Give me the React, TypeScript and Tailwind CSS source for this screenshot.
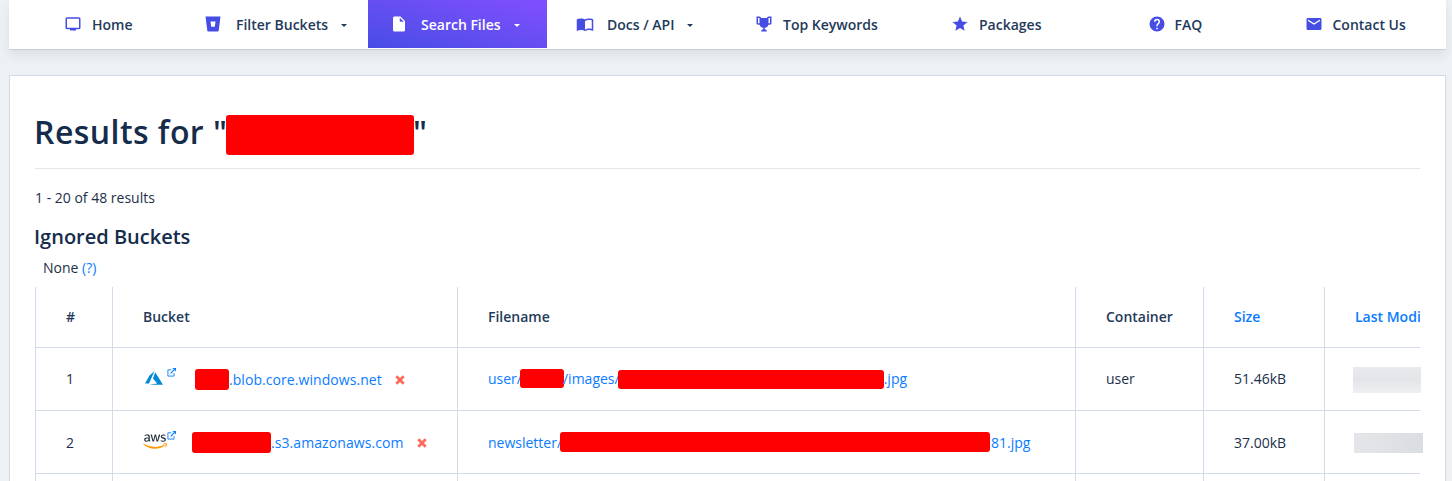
import type { ReactNode } from "react";
import { FaAws } from "react-icons/fa";

const Icon = ({ d }: { d: string }) => (
  <svg viewBox="0 0 24 24" className="h-[18px] w-[18px] shrink-0 fill-current" fillRule="evenodd">
    <path d={d} />
  </svg>
);

const icons = {
  monitor:
    "M4 3H20A2 2 0 0 1 22 5V17A2 2 0 0 1 20 19H16V20.5H8V19H4A2 2 0 0 1 2 17V5A2 2 0 0 1 4 3ZM4 5V17H20V5Z",
  bucket: "M2 2H22L19.6 21Q19.4 22 18.4 22H5.6Q4.6 22 4.4 21ZM8.6 8.5L9.6 15.5H14.4L15.4 8.5Z",
  file: "M13 9V3.5L18.5 9M6 2C4.89 2 4 2.89 4 4V20A2 2 0 0 0 6 22H18A2 2 0 0 0 20 20V8L14 2H6Z",
  book: "M21 5C19.89 4.65 18.67 4.5 17.5 4.5C15.55 4.5 13.45 4.9 12 6C10.55 4.9 8.45 4.5 6.5 4.5C4.55 4.5 2.45 4.9 1 6V20.65C1 20.9 1.25 21.15 1.5 21.15C1.6 21.15 1.65 21.1 1.75 21.1C3.1 20.45 5.05 20 6.5 20C8.45 20 10.55 20.4 12 21.5C13.35 20.65 15.8 20 17.5 20C19.15 20 20.85 20.3 22.25 21.05C22.35 21.1 22.4 21.1 22.5 21.1C22.75 21.1 23 20.85 23 20.6V6C22.4 5.55 21.75 5.25 21 5M21 18.5C19.9 18.15 18.7 18 17.5 18C15.8 18 13.35 18.65 12 19.5V8C13.35 7.15 15.8 6.5 17.5 6.5C18.7 6.5 19.9 6.65 21 7V18.5Z",
  trophy:
    "M20.2 2H18C17.1 2 16 3 16 4H8C8 3 6.9 2 6 2H2V11C2 12 3 13 4 13H6.2C6.6 15 7.9 16.7 11 17V19.08C8 19.54 8 22 8 22H16C16 22 16 19.54 13 19.08V17C16.1 16.7 17.4 15 17.8 13H20C21 13 22 12 22 11V2H20.2M4 11V4H6V11H4M20 11H18V4H20V11Z",
  star: "M12 17.27L18.18 21L16.54 13.97L22 9.24L14.81 8.62L12 2L9.19 8.62L2 9.24L7.45 13.97L5.82 21L12 17.27Z",
  help: "M15.07 11.25L14.17 12.17C13.45 12.89 13 13.5 13 15H11V14.5C11 13.39 11.45 12.39 12.17 11.67L13.41 10.41C13.78 10.05 14 9.55 14 9C14 7.89 13.1 7 12 7A2 2 0 0 0 10 9H8A4 4 0 0 1 12 5A4 4 0 0 1 16 9C16 9.88 15.64 10.67 15.07 11.25M13 19H11V17H13M12 2A10 10 0 0 0 2 12A10 10 0 0 0 12 22A10 10 0 0 0 22 12C22 6.47 17.5 2 12 2Z",
  mail: "M20 8L12 13L4 8V6L12 11L20 6M20 4H4C2.89 4 2 4.89 2 6V18A2 2 0 0 0 4 20H20A2 2 0 0 0 22 18V6C22 4.89 21.1 4 20 4Z",
};

type NavItem = { label: string; icon: string; box: string; gap: string; caret?: boolean; active?: boolean };

const nav: NavItem[] = [
  { label: "Home", icon: icons.monitor, box: "w-[171px] pl-[55px]", gap: "ml-[10px]" },
  { label: "Filter Buckets", icon: icons.bucket, box: "w-[188px] pl-[24px]", gap: "ml-[14px]", caret: true },
  { label: "Search Files", icon: icons.file, box: "w-[179px] pl-[22px]", gap: "ml-[13px]", caret: true, active: true },
  { label: "Docs / API", icon: icons.book, box: "w-[173px] pl-[29px]", gap: "ml-[13px]", caret: true },
  { label: "Top Keywords", icon: icons.trophy, box: "w-[196px] pl-[35px]", gap: "ml-[10px]" },
  { label: "Packages", icon: icons.star, box: "w-[196px] pl-[35px]", gap: "ml-[10px]" },
  { label: "FAQ", icon: icons.help, box: "w-[158px] pl-[36px]", gap: "ml-[8.5px]" },
  { label: "Contact Us", icon: icons.mail, box: "w-[176px] pl-[35px]", gap: "ml-[9.5px]" },
];

const Redacted = ({ className }: { className: string }) => (
  <span className={`inline-block shrink-0 rounded-[3px] bg-[#ff0000] ${className}`} />
);

const ExternalIcon = () => (
  <svg viewBox="0 0 9 9" className="h-[9px] w-[9px] shrink-0" fill="none" stroke="#0a7cff">
    <path d="M4.3 1.8H.9V8.1H7V5.1" strokeWidth="0.9" />
    <path d="M3.7 5.3L7.3 1.7" strokeWidth="1.2" />
    <path d="M5.4 0H9V3.6Z" fill="#0a7cff" stroke="none" />
  </svg>
);

const AzureIcon = () => (
  <svg viewBox="0 0 18 14" className="h-[14px] w-[18px] shrink-0" fill="#0089d6">
    <path d="M9.5 0L4.5 4.4L0 12.5H4ZM10.2 1.2L8 7.4L12.2 12.4L4.1 13.8H18Z" />
  </svg>
);

const AwsIcon = () => (
  <>
    <svg className="absolute h-0 w-0">
      <linearGradient id="aws-tone" x1="0" y1="0" x2="0" y2="1">
        <stop offset="0.64" stopColor="#252f3e" />
        <stop offset="0.64" stopColor="#ff9900" />
      </linearGradient>
    </svg>
    <FaAws fill="url(#aws-tone)" className="mt-px h-[19px] w-[24px]" />
  </>
);

const RemoveIcon = () => (
  <svg viewBox="0 0 10 10" className="ml-[13px] mt-[2px] h-[10px] w-[10px] shrink-0">
    <path d="M1.3 1.3L8.7 8.7M8.7 1.3L1.3 8.7" stroke="#ff6b5a" strokeWidth="2.8" />
  </svg>
);

const Th = ({ children, className = "" }: { children: ReactNode; className?: string }) => (
  <th
    className={`border-b border-l border-[#d3dbea] pb-[2px] pl-[30px] text-left align-middle font-semibold ${className}`}
  >
    {children}
  </th>
);

const Td = ({ children, className = "" }: { children?: ReactNode; className?: string }) => (
  <td className={`border-b border-l border-[#d3dbea] pl-[30px] align-middle ${className}`}>{children}</td>
);

export default function App() {
  return (
    <div className="h-[481px] w-[1452px] overflow-hidden bg-[#edf1f4] pl-[9px] font-['Open_Sans',sans-serif] text-[14px] text-[#1d2f48]">
      <nav className="flex h-[50px] w-[1437px] border-b border-[#c9ced7] bg-white shadow-[0_5px_10px_rgba(0,0,0,0.07)]">
        {nav.map((item) => (
          <a
            key={item.label}
            className={`flex h-12 shrink-0 items-center font-semibold ${item.box} ${
              item.active ? "bg-linear-to-tr from-[#464de4] to-[#814eff] text-white" : "text-[#243a5a]"
            }`}
          >
            <span className={item.active ? "" : "text-[#464de4]"}>
              <Icon d={item.icon} />
            </span>
            <span className={`whitespace-nowrap ${item.gap}`}>{item.label}</span>
            {item.caret && (
              <span className="ml-[13px] mt-[2px] border-x-[3px] border-t-[3px] border-x-transparent border-t-current" />
            )}
          </a>
        ))}
      </nav>

      <main className="mt-[25px] h-[500px] w-[1437px] border border-[#d3dbea] bg-white px-[25px]">
        <h1 className="flex h-[93px] items-start border-b border-[#e3e5e8] pt-[33px] text-[32px] font-semibold leading-[46px] text-[#152c4b]">
          <span className="-ml-px w-[192px] whitespace-pre tracking-[0.45px]">Results for "</span>
          <Redacted className="mt-[6px] h-[40px] w-[188px]" />
          <span className="-ml-px">"</span>
        </h1>
        <p className="mt-[18px] leading-[21px]">1 - 20 of 48 results</p>
        <h2 className="-ml-px mt-[16px] text-[20px] font-semibold leading-[26px] text-[#152c4b]">Ignored Buckets</h2>
        <p className="ml-[8px] mt-[7px] leading-[21px]">
          None <a className="text-[#0a7cff]">(?)</a>
        </p>

        <table className="mt-[9px] w-[1385px] table-fixed border-separate border-spacing-0">
          <colgroup>
            <col className="w-[77px]" />
            <col className="w-[345px]" />
            <col className="w-[618px]" />
            <col className="w-[128px]" />
            <col className="w-[121px]" />
            <col className="w-[96px]" />
          </colgroup>
          <thead>
            <tr className="h-[61px] text-[#243a5a]">
              <Th>#</Th>
              <Th>Bucket</Th>
              <Th>Filename</Th>
              <Th>Container</Th>
              <Th className="text-[#0a7cff]">Size</Th>
              <Th className="text-[#0a7cff]">
                <span className="block overflow-hidden whitespace-nowrap">Last Modified</span>
              </Th>
            </tr>
          </thead>
          <tbody>
            <tr className="h-[63px]">
              <Td className="pb-[2px]">1</Td>
              <Td>
                <div className="flex h-[21px] items-center text-[#0a7cff]">
                  <span className="mb-[5px] ml-[2px] flex w-[50px] items-start">
                    <span className="pt-[3px]">
                      <AzureIcon />
                    </span>
                    <span className="ml-[4px]">
                      <ExternalIcon />
                    </span>
                  </span>
                  <Redacted className="mt-[1px] h-[21px] w-[34px]" />
                  <span className="tracking-[0.06px]">.blob.core.windows.net</span>
                  <RemoveIcon />
                </div>
              </Td>
              <Td className="pb-[2px]">
                <div className="flex h-[21px] items-center text-[#0a7cff]">
                  <span>user/</span>
                  <Redacted className="-ml-[2px] -mr-px h-[19px] w-[44px]" />
                  <span>/images/</span>
                  <Redacted className="-ml-[2px] mt-[3px] h-[19px] w-[266px]" />
                  <span>.jpg</span>
                </div>
              </Td>
              <Td className="pb-[2px]">user</Td>
              <Td className="pb-[2px]">51.46kB</Td>
              <Td>
                <div className="-ml-[2px] mt-[2px] h-[26px] w-[68px] bg-linear-to-b from-[#e9eaed] via-[#e3e5e9] to-[#eff0f2]" />
              </Td>
            </tr>
            <tr className="h-[63px]">
              <Td>2</Td>
              <Td>
                <div className="flex h-[21px] items-center text-[#0a7cff]">
                  <span className="mb-[3px] flex w-[49px] items-start">
                    <AwsIcon />
                    <ExternalIcon />
                  </span>
                  <Redacted className="mt-[1px] h-[21px] w-[79px]" />
                  <span className="tracking-[0.08px]">.s3.amazonaws.com</span>
                  <RemoveIcon />
                </div>
              </Td>
              <Td>
                <div className="flex h-[21px] items-center text-[#0a7cff]">
                  <span>newsletter/</span>
                  <Redacted className="-ml-[2px] mr-px h-[20px] w-[430px]" />
                  <span>81.jpg</span>
                </div>
              </Td>
              <Td />
              <Td>37.00kB</Td>
              <Td>
                <div className="-ml-px mt-[2px] h-[20px] w-[69px] bg-linear-to-r from-[#e3e5e9] via-[#e0e2e6] to-[#d9dce1]" />
              </Td>
            </tr>
            <tr className="h-[63px]">
              <Td />
              <Td />
              <Td />
              <Td />
              <Td />
              <Td />
            </tr>
          </tbody>
        </table>
      </main>
    </div>
  );
}
